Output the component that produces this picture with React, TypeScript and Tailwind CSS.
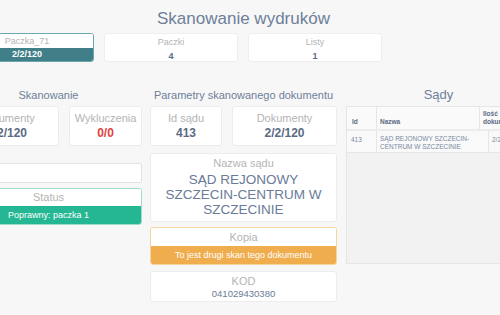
import React from "react";

function StatCard({ label, value, className = "", valueClass = "text-[#5b6b84]" }: { label: string; value: string; className?: string; valueClass?: string }) {
    return (
        <div className={`bg-white rounded-[3px] border border-[#ececec] flex flex-col items-center pt-[4px] pb-[4px] ${className}`}>
            <span className="text-[11px] leading-[14px] text-[#b4b4b4]">{label}</span>
            <span className={`text-[12px] leading-[16px] font-bold ${valueClass}`}>{value}</span>
        </div>
    );
}

function TopCard({ label, value }: { label: string; value: string }) {
    return (
        <div className="w-[134px] h-[29px] bg-white rounded-[3px] border border-[#eeeeee] flex flex-col items-center pt-[3px]">
            <span className="text-[9px] leading-[11px] text-[#b4b4b4]">{label}</span>
            <span className="text-[9px] leading-[12px] mt-[2px] font-bold text-[#5b6b84]">{value}</span>
        </div>
    );
}

export default function App() {
    return (
        <div className="w-[500px] h-[315px] overflow-hidden bg-[#f7f7f7]" style={{ fontFamily: '"Liberation Sans", Arial, sans-serif' }}>
            <div className="ml-[-45px] w-[577px]">
                <h1 className="pt-[8px] text-center text-[17px] leading-[21px] text-[#6e7f99]">Skanowanie wydruków</h1>

                <div className="flex gap-[10px] mt-[4px] pl-[5px]">
                    <div className="w-[134px] h-[29px] rounded-[3px] border border-[#6aa7ae] overflow-hidden flex flex-col">
                        <div className="h-[14px] bg-white text-center text-[9px] leading-[14px] text-[#b4b4b4]">Paczka_71</div>
                        <div className="flex-1 bg-[#417f88] text-center text-[9px] leading-[13px] font-bold text-white">2/2/120</div>
                    </div>
                    <TopCard label="Paczki" value="4" />
                    <TopCard label="Listy" value="1" />
                </div>

                <div className="flex gap-[8px] mt-[24px]">
                    {/* Skanowanie */}
                    <div className="w-[187px] flex flex-col">
                        <div className="h-[18px] mb-[2px] flex items-center justify-center text-[11px] text-[#6e7f99]">Skanowanie</div>
                        <div className="flex gap-[10px]">
                            <StatCard label="Dokumenty" value="2/2/120" className="w-[104px]" />
                            <StatCard label="Wykluczenia" value="0/0" className="w-[73px]" valueClass="text-[#e2403d]" />
                        </div>
                        <div className="h-[20px] mt-[17px] bg-white rounded-[2px] border border-[#e2e2e2]" />
                        <div className="mt-[5px] h-[37px] rounded-[3px] border border-[#9edccd] overflow-hidden flex flex-col">
                            <div className="h-[17px] bg-white text-center text-[11px] leading-[17px] text-[#b4b4b4]">Status</div>
                            <div className="flex-1 bg-[#25b793] text-center text-[9px] leading-[19px] text-white">Poprawny: paczka 1</div>
                        </div>
                    </div>

                    {/* Parametry */}
                    <div className="w-[187px] flex flex-col">
                        <div className="h-[18px] mb-[2px] flex items-center justify-center text-[11px] text-[#6e7f99]">Parametry skanowanego dokumentu</div>
                        <div className="flex gap-[10px]">
                            <StatCard label="Id sądu" value="413" className="w-[72px]" />
                            <StatCard label="Dokumenty" value="2/2/120" className="w-[105px]" />
                        </div>
                        <div className="mt-[7px] h-[69px] bg-white rounded-[3px] border border-[#ececec] flex flex-col items-center pt-[2px] px-[12px]">
                            <span className="text-[11px] leading-[14px] text-[#b4b4b4]">Nazwa sądu</span>
                            <span className="mt-[2px] text-center text-[13.5px] leading-[15px] text-[#6a7b98]">SĄD REJONOWY SZCZECIN-CENTRUM W SZCZECINIE</span>
                        </div>
                        <div className="mt-[5px] h-[38px] rounded-[3px] border border-[#f6d59c] overflow-hidden flex flex-col">
                            <div className="h-[18px] bg-white text-center text-[11px] leading-[18px] text-[#b4b4b4]">Kopia</div>
                            <div className="flex-1 bg-[#f0ad4e] text-center text-[9px] leading-[18px] text-white">To jest drugi skan tego dokumentu</div>
                        </div>
                        <div className="mt-[6px] h-[31px] bg-white rounded-[3px] border border-[#ececec] flex flex-col items-center pt-[3px]">
                            <span className="text-[11px] leading-[13px] text-[#b4b4b4]">KOD</span>
                            <span className="text-[9.5px] leading-[11px] text-[#6a7b98]">041029430380</span>
                        </div>
                    </div>

                    {/* Sądy */}
                    <div className="w-[187px] flex flex-col">
                        <div className="h-[18px] mb-[2px] flex items-center justify-center text-[13px] text-[#6e7f99]">Sądy</div>
                        <div className="ml-[1px] h-[158px] bg-[#f2f2f2] border border-[#e6e6e6] flex flex-col">
                            <div className="h-[24px] bg-[#fafafa] border-b-2 border-[#ececec] flex text-[6.5px] leading-[8px] font-bold text-[#5b6b84]">
                                <div className="w-[30px] border-r border-[#e6e6e6] flex items-end pl-[5px] pb-[3px]">Id</div>
                                <div className="w-[103px] border-r border-[#e6e6e6] flex items-end pl-[3px] pb-[3px]">Nazwa</div>
                                <div className="flex-1 pl-[3px] pt-[3px]">Ilość<br />dokumentów</div>
                            </div>
                            <div className="h-[22px] bg-[#f9f9f9] border-b border-[#e6e6e6] flex text-[6.5px] leading-[8px] text-[#7a8aa3]">
                                <div className="w-[30px] border-r border-[#e6e6e6] pl-[4px] pt-[5px]">413</div>
                                <div className="w-[112px] border-r border-[#e6e6e6] pl-[3px] pt-[4px]">SĄD REJONOWY SZCZECIN-<br />CENTRUM W SZCZECINIE</div>
                                <div className="flex-1 pl-[3px] pt-[5px]">2/2/120</div>
                            </div>
                        </div>
                    </div>
                </div>
            </div>
        </div>
    );
}
